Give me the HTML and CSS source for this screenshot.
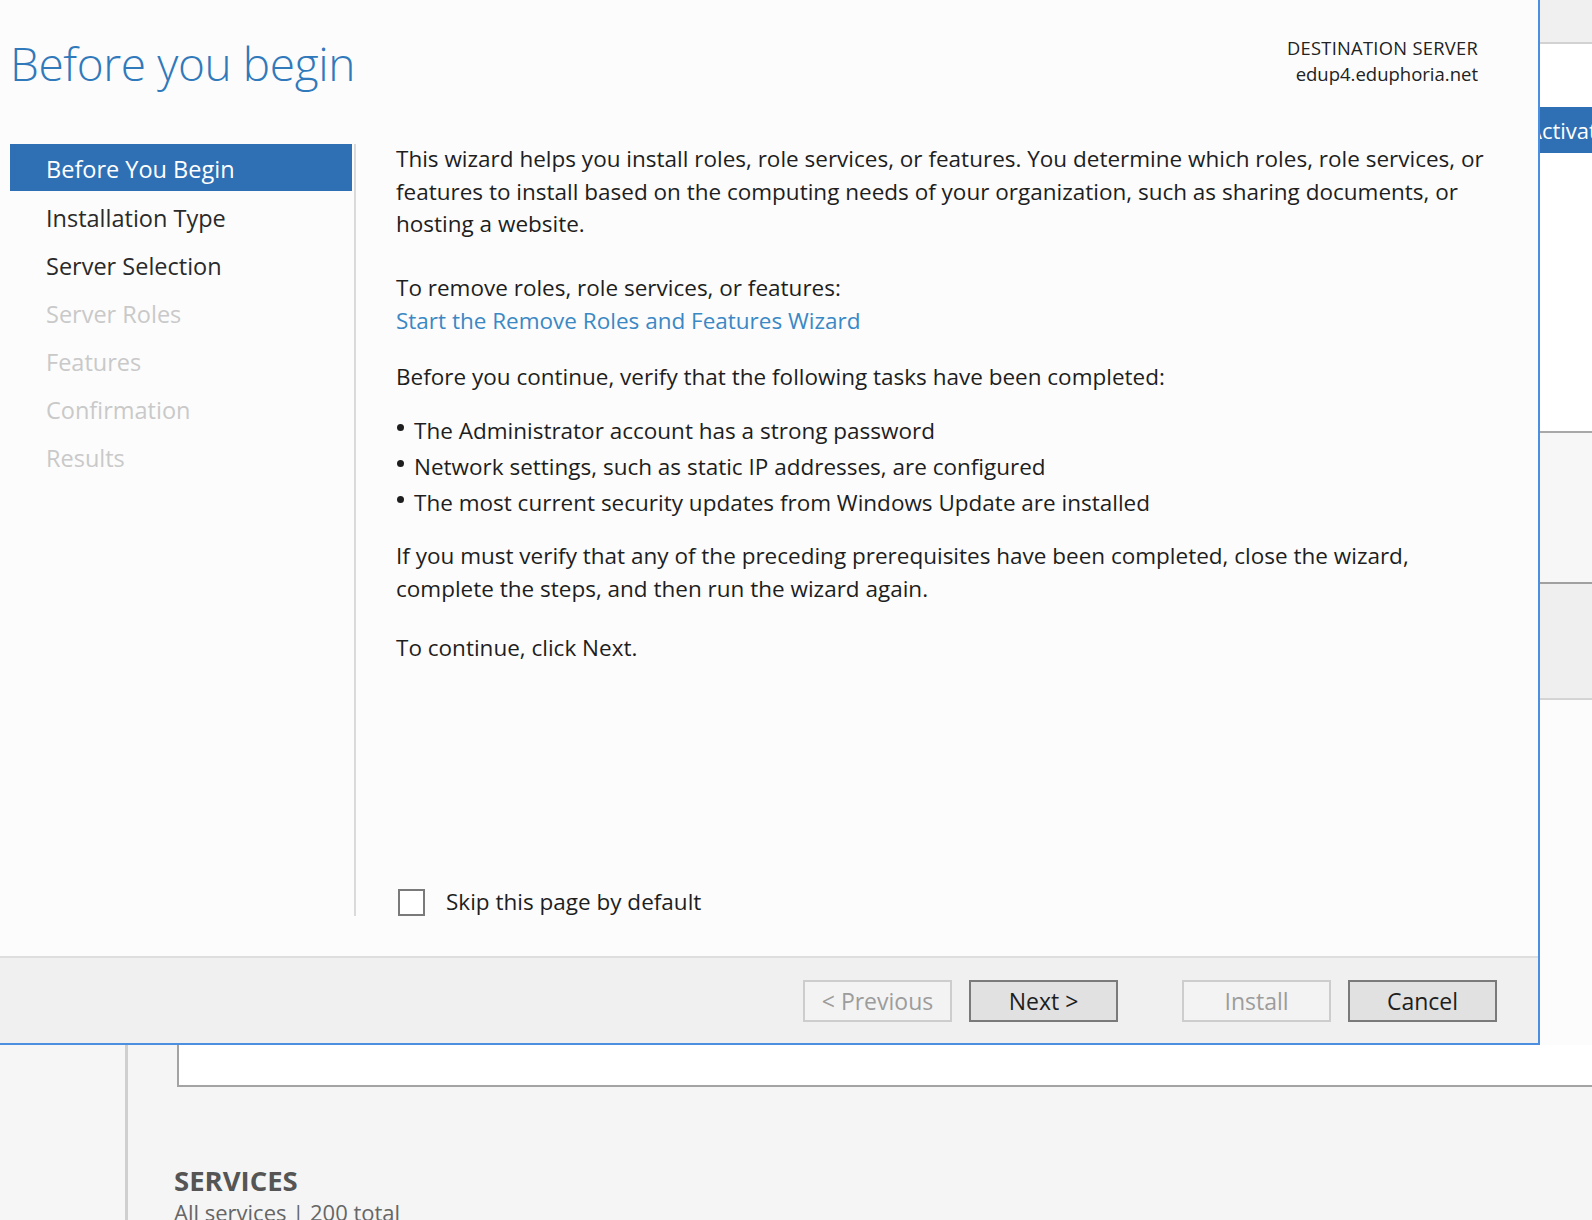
FILE: index.html
```html
<!DOCTYPE html>
<html lang="en">
<head>
<meta charset="utf-8">
<title>Add Roles and Features Wizard</title>
<link rel="stylesheet" href="styles.css">
</head>
<body>
<div class="top">
  <div class="dialog">
    <div class="header">
      <h1 class="title">Before you begin</h1>
      <div class="dest">
        <div class="dest-label">DESTINATION SERVER</div>
        <div>edup4.eduphoria.net</div>
      </div>
    </div>
    <div class="body">
      <ul class="steps">
        <li class="step active">Before You Begin</li>
        <li class="step">Installation Type</li>
        <li class="step">Server Selection</li>
        <li class="step off">Server Roles</li>
        <li class="step off">Features</li>
        <li class="step off">Confirmation</li>
        <li class="step off">Results</li>
      </ul>
      <div class="sep"></div>
      <div class="content">
        <div class="text">
          <p class="p1">This wizard helps you install roles, role services, or features. You determine which roles, role services, or<br>features to install based on the computing needs of your organization, such as sharing documents, or<br>hosting a website.</p>
          <p class="p2">To remove roles, role services, or features:<br><a class="link" href="#">Start the Remove Roles and Features Wizard</a></p>
          <p class="p3">Before you continue, verify that the following tasks have been completed:</p>
          <ul class="bullets">
            <li>The Administrator account has a strong password</li>
            <li>Network settings, such as static IP addresses, are configured</li>
            <li>The most current security updates from Windows Update are installed</li>
          </ul>
          <p class="p4">If you must verify that any of the preceding prerequisites have been completed, close the wizard,<br>complete the steps, and then run the wizard again.</p>
          <p class="p5">To continue, click Next.</p>
        </div>
        <label class="skip"><span class="box"></span><span>Skip this page by default</span></label>
      </div>
    </div>
    <div class="footer">
      <button class="btn disabled">&lt; Previous</button>
      <button class="btn">Next &gt;</button>
      <button class="btn disabled install">Install</button>
      <button class="btn">Cancel</button>
    </div>
  </div>
  <div class="strip">
    <div class="s-top"></div>
    <div class="s-gap1"></div>
    <div class="s-blue"><span>Activate</span></div>
    <div class="s-gap2"></div>
    <div class="s-tile1"></div>
    <div class="s-tile2"></div>
    <div class="s-rest"></div>
  </div>
</div>
<div class="bottom">
  <div class="b-left"></div>
  <div class="b-main">
    <div class="b-box"></div>
    <div class="services">SERVICES</div>
    <div class="services-sub">All services | 200 total</div>
  </div>
</div>
</body>
</html>
```
FILE: styles.css
```css
* { box-sizing: border-box; }
html, body { margin: 0; padding: 0; }
body {
  width: 1592px;
  height: 1220px;
  overflow: hidden;
  background: #f4f4f4;
  font-family: "Open Sans", "Noto Sans", "Liberation Sans", sans-serif;
  color: #1e1e1e;
}
.top { display: flex; height: 1045px; }
.dialog {
  width: 1540px;
  height: 1045px;
  background: #fcfcfc;
  border-right: 2px solid #4c8ee0;
  border-bottom: 2px solid #4c8ee0;
  display: flex;
  flex-direction: column;
}
.header {
  height: 144px;
  display: flex;
  justify-content: space-between;
  align-items: flex-start;
}
.title {
  margin: 0;
  padding: 31px 0 0 10px;
  font-weight: 300;
  font-size: 46px;
  line-height: 64px;
  color: #3079bb;
  letter-spacing: -0.4px;
}
.dest {
  padding: 35px 60px 0 0;
  text-align: right;
  font-size: 18.5px;
  line-height: 26px;
  color: #222;
}
.dest-label { font-size: 18.3px; letter-spacing: 0.3px; }
.body {
  height: 812px;
  display: flex;
  padding-left: 10px;
}
.steps {
  list-style: none;
  margin: 0;
  padding: 0;
  width: 342px;
}
.step {
  height: 48px;
  line-height: 47px;
  padding-top: 3px;
  padding-left: 36px;
  font-size: 23.5px;
  color: #2a2a2a;
}
.step.active { background: #2f70b5; color: #fff; height: 47px; margin-bottom: 1px; padding-top: 4px; line-height: 43px; }
.step.off { color: #c9c9c9; }
.sep {
  width: 2px;
  height: 772px;
  margin-left: 2px;
  background: #dadada;
}
.content {
  margin-left: 40px;
  height: 772px;
  display: flex;
  flex-direction: column;
  justify-content: space-between;
  font-size: 22.5px;
  line-height: 32.5px;
  white-space: nowrap;
}
.text { margin-top: -1px; }
.text p { margin: 0; }
.p2 { margin-top: 31.5px !important; }
.p3 { margin-top: 23.5px !important; }
.p4 { margin-top: 19.5px !important; }
.p5 { margin-top: 27.4px !important; }
.link { color: #3a88c4; text-decoration: none; }
.bullets {
  list-style: none;
  margin: 19.5px 0 0 0;
  padding: 0;
}
.bullets li {
  position: relative;
  padding-left: 18px;
  line-height: 36px;
}
.bullets li::before {
  content: "";
  position: absolute;
  left: 1px;
  top: 11px;
  width: 7px;
  height: 7px;
  border-radius: 50%;
  background: #1e1e1e;
}
.skip {
  display: flex;
  align-items: center;
  height: 28px;
  font-size: 22.5px;
}
.box {
  width: 27px;
  height: 27px;
  margin-left: 2px;
  border: 2px solid #7a7a7a;
  background: #fff;
  margin-right: 21px;
}
.footer {
  height: 87px;
  background: #f0f0f0;
  border-top: 2px solid #dedede;
  display: flex;
  align-items: center;
  justify-content: flex-end;
  padding-right: 41px;
  gap: 17px;
}
.btn {
  width: 149px;
  height: 42px;
  border: 2px solid #7a7a7a;
  background: #e1e1e1;
  font-family: inherit;
  font-size: 23px;
  color: #1e1e1e;
  padding: 0;
}
.btn.disabled {
  border-color: #cdcdcd;
  background: #f3f3f3;
  color: #9c9c9c;
}
.btn.install { margin-left: 47px; }
.strip {
  width: 52px;
  height: 1045px;
  display: flex;
  flex-direction: column;
  overflow: hidden;
}
.s-top { height: 44px; background: #f0f0f0; border-bottom: 2px solid #d2d2d2; }
.s-gap1 { height: 63px; background: #fff; }
.s-blue {
  height: 46px;
  background: #2f70b5;
  color: #fff;
  font-size: 22px;
  line-height: 46px;
  white-space: nowrap;
  overflow: hidden;
}
.s-blue span { display: inline-block; margin-left: -12px; }
.s-gap2 { height: 278px; background: #fff; }
.s-tile1 { height: 151px; background: #f7f7f7; border-top: 2px solid #a8a8a8; }
.s-tile2 { height: 118px; background: #efefef; border-top: 2px solid #a0a0a0; border-bottom: 2px solid #d4d4d4; }
.s-rest { flex: 1; background: #fcfcfc; }
.bottom { display: flex; height: 175px; }
.b-left {
  width: 128px;
  background: #f6f6f6;
  border-right: 3px solid #cfcfcf;
}
.b-main {
  flex: 1;
  background: #f5f5f5;
  padding-left: 46px;
}
.b-box {
  height: 42px;
  margin-left: 3px;
  background: #fff;
  border-left: 2px solid #a3a3a3;
  border-bottom: 2px solid #a3a3a3;
}
.services {
  margin-top: 78px;
  font-size: 27.5px;
  font-weight: 700;
  line-height: 32px;
  color: #555;
}
.services-sub {
  font-size: 22px;
  line-height: 30px;
  color: #666;
}
```
